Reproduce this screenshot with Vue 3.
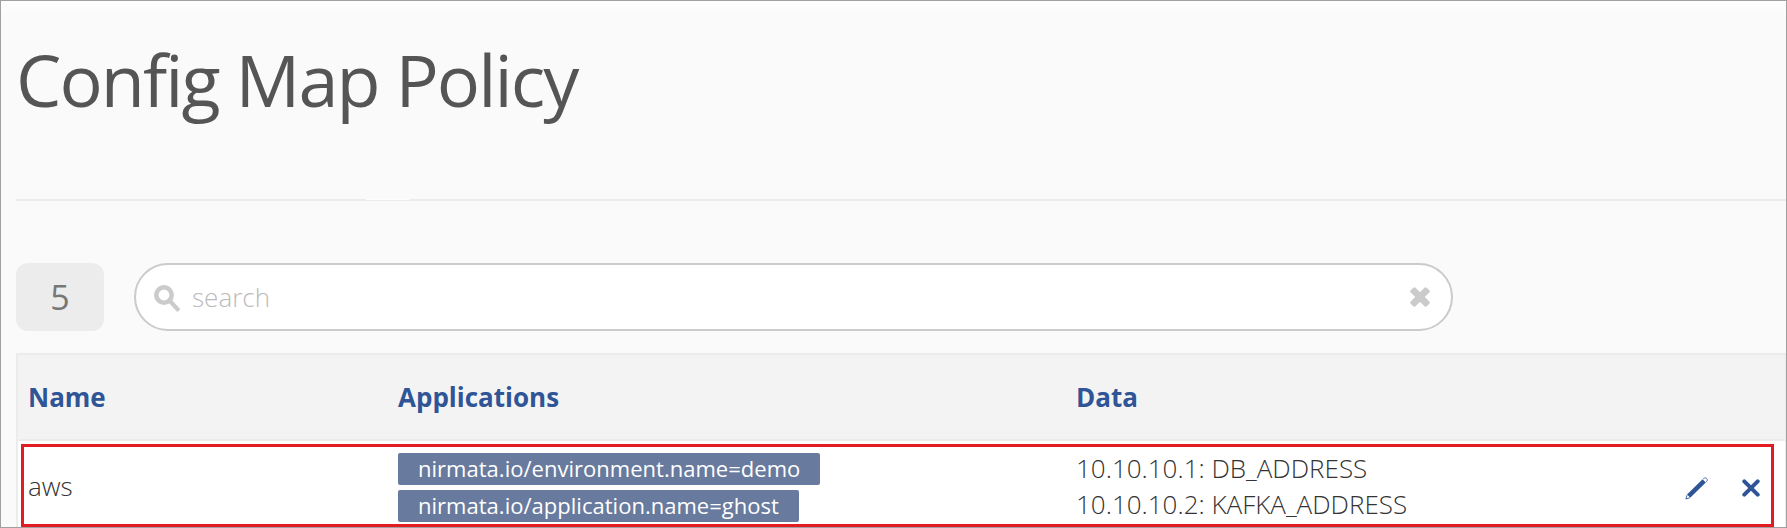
<script setup>
const rows = [
  {
    name: 'aws',
    applications: ['nirmata.io/environment.name=demo', 'nirmata.io/application.name=ghost'],
    data: ['10.10.10.1: DB_ADDRESS', '10.10.10.2: KAFKA_ADDRESS'],
  },
]
const count = 5
</script>

<template>
  <main class="page">
    <header class="page-head">
      <h1>Config Map Policy</h1>
      <div class="notch"></div>
    </header>

    <div class="toolbar">
      <div class="count">{{ count }}</div>
      <label class="search">
        <svg class="lens" viewBox="0 0 27 28" width="27" height="28">
          <circle cx="10" cy="10" r="7.7" fill="none" stroke="#cbcbcb" stroke-width="4.6" />
          <path d="M15.5 15.5L24.8 25.6" stroke="#cbcbcb" stroke-width="4.2" />
        </svg>
        <input type="text" placeholder="search" />
        <svg class="clear" viewBox="0 0 20 20" width="20" height="20">
          <g fill="#cbcbcb">
            <rect x="-1.3" y="6.6" width="22.6" height="6.8" rx="1.6" transform="rotate(45 10 10)" />
            <rect x="-1.3" y="6.6" width="22.6" height="6.8" rx="1.6" transform="rotate(-45 10 10)" />
          </g>
        </svg>
      </label>
    </div>

    <section class="table">
      <div class="row head">
        <div>Name</div>
        <div>Applications</div>
        <div>Data</div>
        <div></div>
      </div>
      <div v-for="row in rows" :key="row.name" class="row body">
        <div class="name">{{ row.name }}</div>
        <div class="tags">
          <span v-for="app in row.applications" :key="app" class="tag">{{ app }}</span>
        </div>
        <div class="data">
          <div v-for="entry in row.data" :key="entry">{{ entry }}</div>
        </div>
        <div class="actions">
          <svg viewBox="0 0 23 23" width="23" height="23">
            <path d="M3.6 19.2L19.2 3.9" stroke="#2f5597" stroke-width="4.6" />
            <path d="M18.2 1.9c1.2-1.4 2.7-1.2 3.5-.4s.9 2.2-.4 3.4" fill="#fff" stroke="#2f5597" stroke-width=".8" />
            <path d="M2 18.2L.9 22l3.8-1.2" fill="#fff" stroke="#2f5597" stroke-width=".9" />
          </svg>
          <svg viewBox="0 0 18 18" width="18" height="18">
            <path d="M2.3 2.3L15.7 15.7M15.7 2.3L2.3 15.7" stroke="#2f5597" stroke-width="4" stroke-linecap="round" />
          </svg>
        </div>
      </div>
    </section>
  </main>
</template>

<style>
body {
  margin: 0;
  overflow: hidden;
}
</style>

<style scoped>
* {
  box-sizing: border-box;
}
.page {
  display: flex;
  flex-direction: column;
  width: 1787px;
  height: 528px;
  padding-left: 15px;
  overflow: hidden;
  border: 1px solid #a0a0a0;
  background: linear-gradient(#fdfdfd, #fafafa 16px);
  font-family: 'Open Sans', sans-serif;
}
.page-head {
  position: relative;
  flex: none;
  height: 200px;
  border-bottom: 2px solid #ececec;
}
h1 {
  margin: 0;
  padding-top: 29px;
  color: #555;
  font-size: 72px;
  font-weight: 400;
  line-height: 98px;
  letter-spacing: -1.92px;
}
.notch {
  position: absolute;
  bottom: -1px;
  left: 350px;
  width: 43px;
  height: 1px;
  background: #fdfdfd;
}
.toolbar {
  display: flex;
  flex: none;
  gap: 30px;
  height: 68px;
  margin-top: 62px;
}
.count {
  width: 88px;
  border-radius: 12px;
  background: #ececec;
  color: #777;
  font-size: 34px;
  line-height: 68px;
  text-align: center;
}
.search {
  display: flex;
  align-items: center;
  width: 1319px;
  padding: 0 21px 0 18px;
  border: 2px solid #cbcbcb;
  border-radius: 34px;
  background: #fff;
}
.lens {
  margin-top: 4px;
}
input {
  flex: 1;
  min-width: 0;
  height: 40px;
  margin-left: 11px;
  padding: 0;
  border: 0;
  outline: 0;
  background: none;
  font: 300 26px 'Open Sans', sans-serif;
}
input::placeholder {
  color: #bbb;
  opacity: 1;
}
.table {
  flex: none;
  margin-top: 22px;
  border: 2px solid #ececec;
  border-right: 1px solid #ececec;
  background: #fff;
}
.row {
  display: grid;
  grid-template-columns: 370px 678px 597px 1fr;
  align-items: center;
}
.head {
  height: 86px;
  padding-left: 10px;
  border-bottom: 2px solid #ececec;
  background: #f3f3f3;
  color: #2f5597;
  font-size: 26px;
  font-weight: 700;
  line-height: 36px;
}
.body {
  height: 83px;
  margin: 3px 11px 0 3px;
  padding: 1px 0 0 4px;
  border: 3px solid #e31b23;
  background: #fff;
  color: #333;
  font-size: 26px;
  font-weight: 300;
  line-height: 36px;
}
.tags {
  display: flex;
  flex-direction: column;
  align-items: flex-start;
  gap: 5px;
  margin-top: 3px;
}
.tag {
  height: 32px;
  padding: 0 20px;
  border-radius: 2px;
  background: #687a9d;
  color: #fff;
  font-size: 22px;
  font-weight: 400;
  line-height: 30px;
  letter-spacing: 0.02px;
}
.actions {
  display: flex;
  align-items: center;
  gap: 34px;
  margin-top: 4px;
  padding-left: 12px;
}
</style>
